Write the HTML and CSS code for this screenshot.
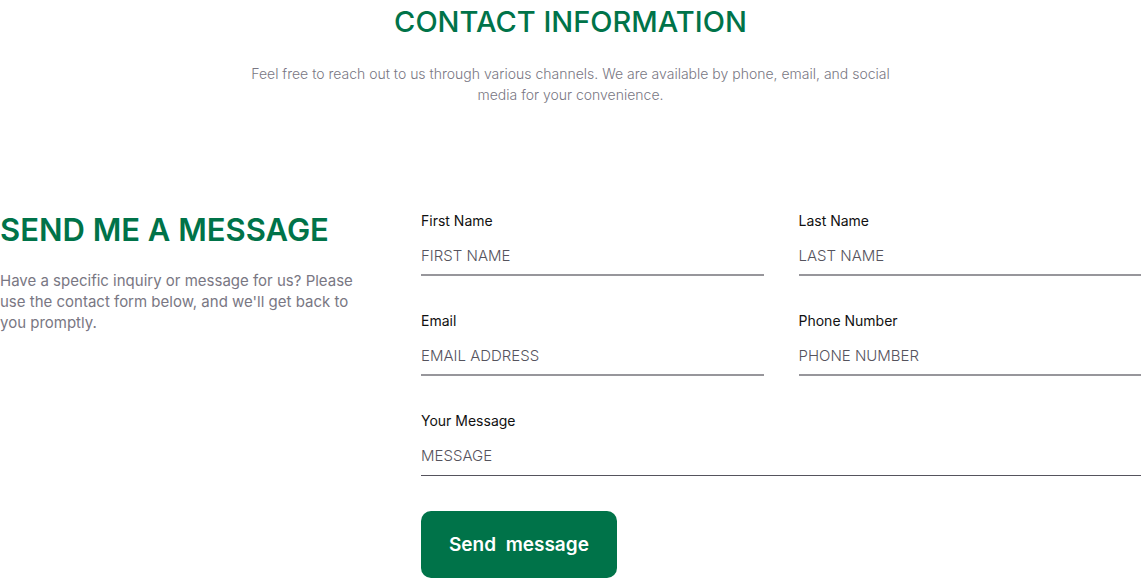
FILE: index.html
```html
<!DOCTYPE html>
<html lang="en">
<head>
<meta charset="utf-8">
<meta name="viewport" content="width=device-width, initial-scale=1">
<title>Contact Information</title>
<link rel="stylesheet" href="styles.css">
</head>
<body>
<main class="contact">
  <header class="intro">
    <h1 class="intro-title">CONTACT INFORMATION</h1>
    <p class="intro-text">Feel free to reach out to us through various channels. We are available by phone, email, and social media for your convenience.</p>
  </header>
  <section class="message">
    <div class="aside">
      <h2 class="aside-title">SEND ME A MESSAGE</h2>
      <p class="aside-text">Have a specific inquiry or message for us? Please use the contact form below, and we'll get back to you promptly.</p>
    </div>
    <form class="form">
      <div class="field">
        <label class="label" for="first">First Name</label>
        <input class="input" id="first" type="text" placeholder="FIRST NAME">
      </div>
      <div class="field">
        <label class="label" for="last">Last Name</label>
        <input class="input" id="last" type="text" placeholder="LAST NAME">
      </div>
      <div class="field">
        <label class="label" for="email">Email</label>
        <input class="input" id="email" type="email" placeholder="EMAIL ADDRESS">
      </div>
      <div class="field">
        <label class="label" for="phone">Phone Number</label>
        <input class="input" id="phone" type="tel" placeholder="PHONE NUMBER">
      </div>
      <div class="field field-wide">
        <label class="label" for="msg">Your Message</label>
        <input class="input input-message" id="msg" type="text" placeholder="MESSAGE">
      </div>
      <button class="send" type="submit">Send&nbsp; message</button>
    </form>
  </section>
</main>
</body>
</html>
```

FILE: styles.css
```css
* {
  box-sizing: border-box;
}

body {
  margin: 0;
  background: #fff;
  color: #111;
  font-family: Inter, "Liberation Sans", sans-serif;
}

h1, h2, p {
  margin: 0;
}

.contact {
  display: flex;
  flex-direction: column;
  gap: 87px;
}

.intro {
  display: flex;
  flex-direction: column;
  align-items: center;
  gap: 20px;
  text-align: center;
}

.intro-title {
  color: #007349;
  font-size: 29px;
  font-weight: 500;
  line-height: 43px;
}

.intro-text {
  max-width: 660px;
  color: #797783;
  font-size: 14px;
  font-weight: 300;
  line-height: 21px;
}

.message {
  display: grid;
  grid-template-columns: 1fr 2fr;
  column-gap: 61px;
  align-items: start;
}

.aside {
  display: flex;
  flex-direction: column;
  gap: 18px;
  padding-top: 16px;
}

.aside-title {
  color: #007349;
  font-size: 31px;
  font-weight: 600;
  line-height: 44px;
  white-space: nowrap;
}

.aside-text {
  color: #797783;
  font-size: 15px;
  font-weight: 400;
  line-height: 21px;
}

.form {
  display: grid;
  grid-template-columns: 1fr 1fr;
  gap: 35px;
  padding-top: 19px;
}

.field {
  display: flex;
  flex-direction: column;
  gap: 8px;
}

.field-wide {
  grid-column: 1 / -1;
}

.label {
  font-size: 14px;
  line-height: 20px;
}

.input {
  width: 100%;
  height: 37px;
  padding: 0 0 2px;
  border: 0;
  border-bottom: 2px solid #97969b;
  border-radius: 0;
  outline: 0;
  background: transparent;
  color: #111;
  font: 300 15px/24px Inter, "Liberation Sans", sans-serif;
}

.input-message {
  padding-bottom: 4px;
  border-bottom: 1px solid #55535d;
}

.input::placeholder {
  color: #55535d;
  opacity: 1;
}

.send {
  justify-self: start;
  padding: 20px 28px;
  border: 0;
  border-radius: 10px;
  background: #007349;
  color: #fff;
  font: 600 19px/27px Inter, "Liberation Sans", sans-serif;
}
```
